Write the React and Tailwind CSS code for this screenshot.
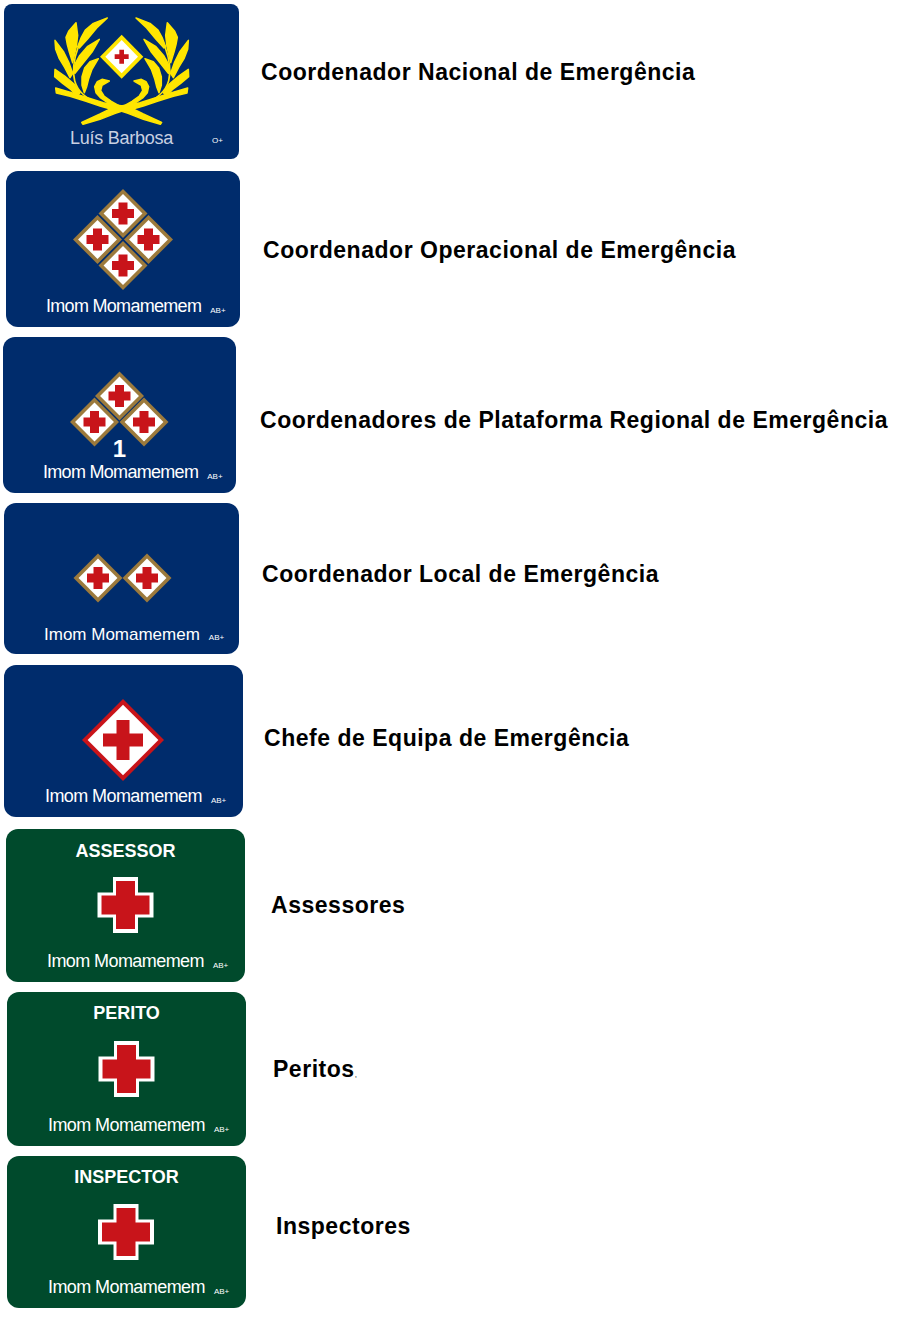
const FONT = { fontFamily: '"Liberation Sans", Arial, sans-serif' };
const RED = "#c8141a";

function Cross({ cx, cy, len, arm, fill = RED }) {
  const l = len / 2;
  const a = arm / 2;
  return (
    <path
      fill={fill}
      d={`M${cx - a} ${cy - l}H${cx + a}V${cy - a}H${cx + l}V${cy + a}H${cx + a}V${cy + l}H${cx - a}V${cy + a}H${cx - l}V${cy - a}H${cx - a}Z`}
    />
  );
}

function Diamond({ cx, cy, r = 24.5, border = "#9c7a3c", bw = 3.6, len = 22, arm = 9 }) {
  const poly = (q) => `${cx},${cy - q} ${cx + q},${cy} ${cx},${cy + q} ${cx - q},${cy}`;
  return (
    <g>
      <polygon points={poly(r)} fill={border} />
      <polygon points={poly(r - bw * 1.41)} fill="#ffffff" />
      <Cross cx={cx} cy={cy} len={len} arm={arm} />
    </g>
  );
}

function Laurel() {
  const leaves = [
    "M172 18L130 34L106 54L94 76L83 104L88 108L112 82L140 48Z",
    "M78 32L56 58L48 76L52 98L58 120L68 152L73 130L79 104L83 70Z",
    "M148 82L112 104L88 132L76 154L70 180L75 184L100 152L126 120Z",
    "M15 85L17 112L28 140L44 166L60 197L68 184L56 150L40 118Z",
    "M145 140L120 149L104 168L96 194L96 220L103 242L110 224L116 200L126 172Z",
    "M15 172L14 194L38 214L62 232L80 252L90 242L72 216L44 192Z",
    "M178 207L156 202L142 209L134 224L138 242L152 258L176 274L200 286L212 284L184 268L162 252L152 236L156 220Z",
    "M17 228L19 243L60 253L108 268L150 282L200 296L214 284L160 272L108 256L60 241Z",
    "M95 331L99 337L150 322L196 304L226 294L226 280L190 286L150 306Z",
  ];
  const stem = "M85 104C72 140 66 176 74 206C82 236 110 262 150 276L205 290";
  const art = (
    <>
      {leaves.map((d) => (
        <path key={d} d={d} stroke="#ffe600" strokeWidth="4.5" strokeLinejoin="round" />
      ))}
      <path d={stem} fill="none" stroke="#ffe600" strokeWidth="5" />
    </>
  );
  return (
    <g fill="#ffe600">
      <g transform="translate(150 36)">{art}</g>
      <g transform="translate(730 0) scale(-1 1) translate(150 36)">{art}</g>
    </g>
  );
}

function Emblem({ x, y, w, h, children }) {
  return (
    <svg className="block shrink-0" width={w} height={h} viewBox={`${x} ${y} ${w} ${h}`}>
      {children}
    </svg>
  );
}

function GreenCross({ cx, cy }) {
  return (
    <>
      <Cross cx={cx} cy={cy} len={56} arm={25} fill="#ffffff" />
      <Cross cx={cx} cy={cy} len={48} arm={19} />
    </>
  );
}

function Row({ className, cardClass, textClass, label, children }) {
  return (
    <div className={`flex items-start ${className}`}>
      <div className={`flex flex-col shrink-0 overflow-hidden ${cardClass}`}>{children}</div>
      <div className={`h-7 text-[23px] leading-7 font-bold tracking-[0.52px] text-black whitespace-nowrap ${textClass}`}>{label}</div>
    </div>
  );
}

function NameRow({
  name,
  blood,
  className = "mb-[9px]",
  bloodClass = "translate-y-px",
  nameClass = "text-white text-[18px] tracking-[-0.7px]",
}) {
  return (
    <div className={`flex items-baseline h-6 mt-auto whitespace-nowrap ${className}`}>
      <span className={`leading-6 ${nameClass}`}>{name}</span>
      <span className={`text-[8px] leading-6 text-white ml-[9px] ${bloodClass}`}>{blood}</span>
    </div>
  );
}

function Title({ className, children }) {
  return <div className={`h-5 text-center text-white text-[18px] leading-5 font-bold ${className}`}>{children}</div>;
}

const WIDE = "text-white text-[18px] tracking-[-0.58px]";

export default function App() {
  return (
    <div className="bg-white w-[909px] h-[1320px] overflow-hidden" style={FONT}>
      <Row
        className="mt-[4px] ml-[4px]"
        cardClass="w-[235px] h-[155px] rounded-[8px] bg-[#002c6c]"
        textClass="ml-[22px] mt-[54px]"
        label="Coordenador Nacional de Emergência"
      >
        <svg className="block shrink-0" width="235" height="122" viewBox="12 12 705 366">
          <Laurel />
          <polygon points="365,104 430,170 365,236 300,170" fill="#ffe600" />
          <polygon points="365,120 414,170 365,220 316,170" fill="#ffffff" />
          <Cross cx={365} cy={170} len={42} arm={14} />
        </svg>
        <NameRow
          name="Luís Barbosa"
          blood="O+"
          className="ml-[66px] mb-[9px]"
          nameClass="text-[#c9d1e2] text-[18px] tracking-[-0.25px]"
          bloodClass="!ml-[39px] -translate-y-px"
        />
      </Row>

      <Row
        className="mt-[12px] ml-[6px]"
        cardClass="w-[234px] h-[156px] rounded-[12px] bg-[#002c6c]"
        textClass="ml-[23px] mt-[65px]"
        label="Coordenador Operacional de Emergência"
      >
        <Emblem x={6} y={171} w={234} h={123}>
          <Diamond cx={123} cy={213.5} />
          <Diamond cx={97.5} cy={239.5} />
          <Diamond cx={148.5} cy={239.5} />
          <Diamond cx={123} cy={265.5} />
        </Emblem>
        <NameRow name="Imom Momamemem" blood="AB+" className="ml-[40px] mb-[9px]" />
      </Row>

      <Row
        className="mt-[10px] ml-[3px]"
        cardClass="w-[233px] h-[156px] rounded-[12px] bg-[#002c6c]"
        textClass="ml-[24px] mt-[69px]"
        label="Coordenadores de Plataforma Regional de Emergência"
      >
        <Emblem x={3} y={337} w={233} h={110}>
          <Diamond cx={119.5} cy={396} />
          <Diamond cx={94.5} cy={422} />
          <Diamond cx={144} cy={422} />
        </Emblem>
        <div className="-mt-[6px] h-4 text-center text-white text-[24px] leading-4 font-bold">1</div>
        <NameRow name="Imom Momamemem" blood="AB+" className="ml-[40px] mb-[9px]" />
      </Row>

      <Row
        className="mt-[10px] ml-[4px]"
        cardClass="w-[235px] h-[151px] rounded-[12px] bg-[#002c6c]"
        textClass="ml-[23px] mt-[57px]"
        label="Coordenador Local de Emergência"
      >
        <Emblem x={4} y={503} w={235} h={118}>
          <Diamond cx={98} cy={578} />
          <Diamond cx={147} cy={578} />
        </Emblem>
        <NameRow
          name="Imom Momamemem"
          blood="AB+"
          className="ml-[40px] mb-[7px]"
          nameClass="text-white text-[17px]"
          bloodClass=""
        />
      </Row>

      <Row
        className="mt-[11px] ml-[4px]"
        cardClass="w-[239px] h-[152px] rounded-[12px] bg-[#002c6c]"
        textClass="ml-[21px] mt-[59px]"
        label="Chefe de Equipa de Emergência"
      >
        <Emblem x={4} y={665} w={239} h={119}>
          <Diamond cx={123} cy={740} r={41} border={RED} bw={4} len={40} arm={13} />
        </Emblem>
        <NameRow name="Imom Momamemem" blood="AB+" className="ml-[41px] mb-[9px]" nameClass={WIDE} />
      </Row>

      <Row
        className="mt-[12px] ml-[6px]"
        cardClass="w-[239px] h-[153px] rounded-[12px] bg-[#004a2c]"
        textClass="ml-[26px] mt-[62px]"
        label="Assessores"
      >
        <Title className="mt-3">ASSESSOR</Title>
        <Emblem x={6} y={861} w={239} h={88}>
          <GreenCross cx={125.5} cy={905} />
        </Emblem>
        <NameRow name="Imom Momamemem" blood="AB+" className="ml-[41px] mb-[9px]" nameClass={WIDE} />
      </Row>

      <Row
        className="mt-[10px] ml-[7px]"
        cardClass="w-[239px] h-[154px] rounded-[12px] bg-[#004a2c]"
        textClass="ml-[27px] mt-[63px]"
        label={
          <>
            Peritos<span className="text-[8px] font-normal">,</span>
          </>
        }
      >
        <Title className="mt-[11px]">PERITO</Title>
        <Emblem x={7} y={1023} w={239} h={90}>
          <GreenCross cx={126.5} cy={1069} />
        </Emblem>
        <NameRow name="Imom Momamemem" blood="AB+" className="ml-[41px] mb-[9px]" nameClass={WIDE} />
      </Row>

      <Row
        className="mt-[10px] ml-[7px]"
        cardClass="w-[239px] h-[152px] rounded-[12px] bg-[#004a2c]"
        textClass="ml-[30px] mt-[56px]"
        label="Inspectores"
      >
        <Title className="mt-[11px]">INSPECTOR</Title>
        <Emblem x={7} y={1187} w={239} h={88}>
          <GreenCross cx={126} cy={1232} />
        </Emblem>
        <NameRow name="Imom Momamemem" blood="AB+" className="ml-[41px] mb-[9px]" nameClass={WIDE} />
      </Row>
    </div>
  );
}
